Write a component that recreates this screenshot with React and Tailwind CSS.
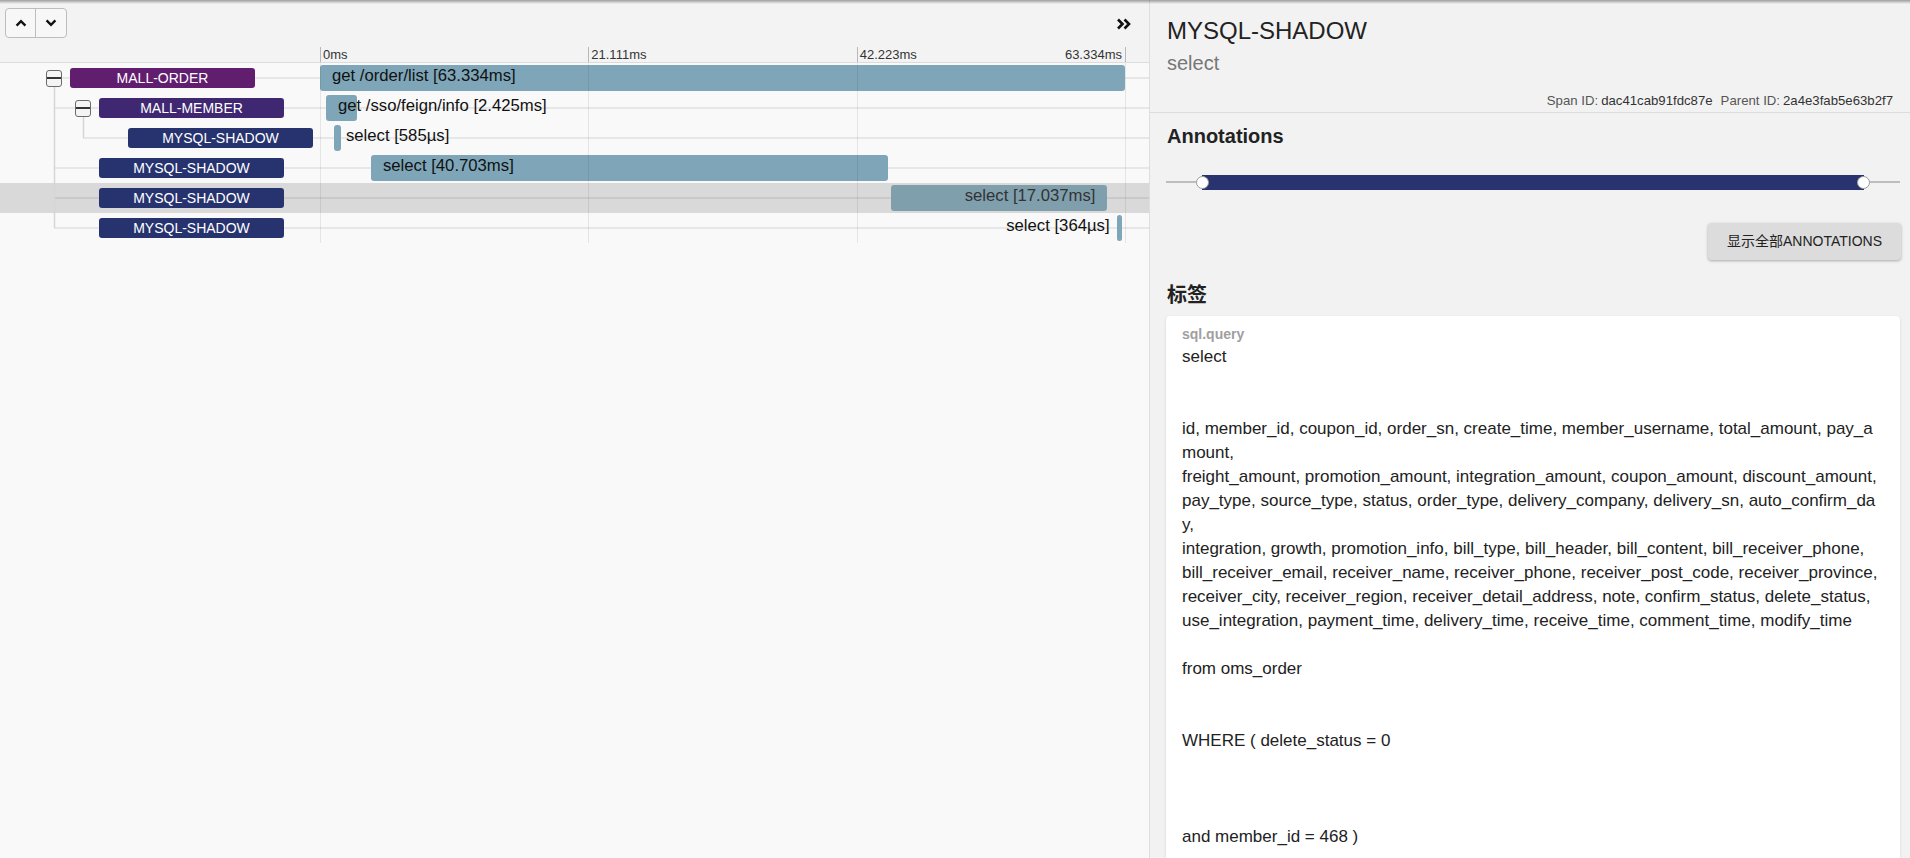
import React from "react";

const TOTAL = 63.334;
const SPAN_PX = 805;
const px = (ms) => (ms / TOTAL) * SPAN_PX;

const serviceClass = {
  "MALL-ORDER": "bg-[#611d6e]",
  "MALL-MEMBER": "bg-[#3f2871]",
  "MYSQL-SHADOW": "bg-[#27336f]",
};

const spans = [
  { depth: 0, service: "MALL-ORDER", name: "get /order/list", dur: "63.334ms", start: 0, ms: 63.334, toggle: true },
  { depth: 1, service: "MALL-MEMBER", name: "get /sso/feign/info", dur: "2.425ms", start: 0.472, ms: 2.425, toggle: true },
  { depth: 2, service: "MYSQL-SHADOW", name: "select", dur: "585µs", start: 1.1, ms: 0.585 },
  { depth: 1, service: "MYSQL-SHADOW", name: "select", dur: "40.703ms", start: 4.01, ms: 40.703 },
  { depth: 1, service: "MYSQL-SHADOW", name: "select", dur: "17.037ms", start: 44.92, ms: 17.037, selected: true },
  { depth: 1, service: "MYSQL-SHADOW", name: "select", dur: "364µs", start: 62.7, ms: 0.364 },
];

const ticks = [
  { x: 0, label: "0ms" },
  { x: 268.3, label: "21.111ms" },
  { x: 536.7, label: "42.223ms" },
  { x: 805, label: "63.334ms", last: true },
];

// sql.query value, already broken where the panel wraps it
const sql = [
  "select",
  "",
  "",
  "id, member_id, coupon_id, order_sn, create_time, member_username, total_amount, pay_a",
  "mount,",
  "freight_amount, promotion_amount, integration_amount, coupon_amount, discount_amount,",
  "pay_type, source_type, status, order_type, delivery_company, delivery_sn, auto_confirm_da",
  "y,",
  "integration, growth, promotion_info, bill_type, bill_header, bill_content, bill_receiver_phone,",
  "bill_receiver_email, receiver_name, receiver_phone, receiver_post_code, receiver_province,",
  "receiver_city, receiver_region, receiver_detail_address, note, confirm_status, delete_status,",
  "use_integration, payment_time, delivery_time, receive_time, comment_time, modify_time",
  "",
  "from oms_order",
  "",
  "",
  "WHERE ( delete_status = 0",
  "",
  "",
  "",
  "and member_id = 468 )",
].join("\n");

function Chevron({ down }) {
  return (
    <svg width="12" height="8" viewBox="0 0 12 8" className={down ? "rotate-180" : ""}>
      <path d="M1.6 6.6L6 2.2l4.4 4.4" fill="none" stroke="#111" strokeWidth="2.4" />
    </svg>
  );
}

function Toggle() {
  return (
    <div className="flex h-[17px] w-[16px] flex-none items-center rounded-[3px] border border-[#6b6b6b] bg-[#f4f4f4]">
      <div className="h-[2px] w-full bg-[#333]" />
    </div>
  );
}

function SpanRow({ s }) {
  const left = px(s.start);
  const width = Math.max(4, px(s.ms));
  const right = left + width;
  const lineLeft = s.depth === 0 ? 46 : 54 + 29 * (s.depth - 1);
  const leftText = s.start < TOTAL / 2;

  return (
    <div className={`relative flex h-[30px] ${s.selected ? "bg-[#d9d9d9]" : ""}`}>
      <div
        className={`absolute right-0 top-[14px] h-[2px] ${s.selected ? "bg-[#c9c9c9]" : "bg-[#e7e7e7]"}`}
        style={{ left: lineLeft }}
      />
      <div
        className="relative flex w-[320px] flex-none items-center gap-[8px]"
        style={{ paddingLeft: 46 + 29 * s.depth }}
      >
        {s.toggle ? <Toggle /> : <div className="w-[16px] flex-none" />}
        <div
          className={`h-[20px] w-[185px] flex-none rounded-[3px] text-center text-[14px] leading-[20px] text-white ${serviceClass[s.service]}`}
        >
          {s.service}
        </div>
      </div>
      <div className="relative flex-1">
        <div
          className={`absolute top-[2px] h-[26px] rounded-[3px] ${s.selected ? "bg-[#7f9fad]" : "bg-[#7ea6b8]"}`}
          style={{ left, width }}
        />
        <span
          className={`absolute top-[2px] whitespace-nowrap text-[16.7px] leading-[21px] ${
            s.selected ? "text-[#333]" : "text-[#111]"
          } ${leftText ? "" : "-translate-x-full"}`}
          style={{ left: leftText ? left + 12 : right - 12 }}
        >
          {s.name} [{s.dur}]
        </span>
      </div>
    </div>
  );
}

function Timeline() {
  return (
    <div className="flex h-full w-[1149px] flex-none flex-col bg-[#f9f9f9]">
      <div className="bg-[#f3f3f3]">
        <div className="flex h-[47px] items-start justify-between pl-[5px] pr-[17px] pt-[8px]">
          <div className="flex h-[30px] overflow-hidden rounded-[4px] border border-[#bdbdbd] bg-[#f7f7f7]">
            <button className="flex w-[30px] items-center justify-center border-r border-[#bdbdbd]">
              <Chevron />
            </button>
            <button className="flex w-[30px] items-center justify-center">
              <Chevron down />
            </button>
          </div>
          <svg className="mt-[10px]" width="16" height="12" viewBox="0 0 16 12">
            <path d="M2 1.5L6.5 6 2 10.5M8.5 1.5L13 6l-4.5 4.5" fill="none" stroke="#111" strokeWidth="2.6" />
          </svg>
        </div>
        <div className="relative h-[16px] border-b border-[#dcdcdc]">
          {ticks.map((t) => (
            <React.Fragment key={t.label}>
              <div className="absolute top-0 h-[15px] w-px bg-[#b8b8b8]" style={{ left: 320 + t.x }} />
              <span
                className={`absolute top-0 whitespace-nowrap text-[13px] leading-[15px] text-[#333] ${
                  t.last ? "-translate-x-full" : ""
                }`}
                style={{ left: t.last ? 320 + t.x - 3 : 320 + t.x + 3 }}
              >
                {t.label}
              </span>
            </React.Fragment>
          ))}
        </div>
      </div>

      <div className="relative">
        {spans.map((s, i) => (
          <SpanRow key={i} s={s} />
        ))}
        <svg className="pointer-events-none absolute left-0 top-0" width="320" height="180">
          <path d="M54.5 24V165M83.5 54V75" stroke="#d6d6d6" strokeWidth="1.5" />
        </svg>
        {ticks.map((t) => (
          <div
            key={t.label}
            className="pointer-events-none absolute bottom-0 top-0 w-px bg-[rgba(0,0,0,0.08)]"
            style={{ left: 320 + t.x }}
          />
        ))}
      </div>
    </div>
  );
}

function Detail() {
  return (
    <div className="flex h-full flex-1 flex-col border-l border-[#dedede] bg-[#f2f2f2] font-['Liberation_Sans','Noto_Sans_CJK_SC',sans-serif]">
      <div className="flex h-[113px] flex-none flex-col border-b border-[#dcdcdc] pl-[17px] pr-[17px] pt-[17px]">
        <h1 className="text-[24px] leading-[28px] text-[#222]">MYSQL-SHADOW</h1>
        <div className="mt-[6px] text-[20px] leading-[24px] text-[#777]">select</div>
        <div className="mt-auto flex justify-end gap-[8px] pb-[3px] text-[13.2px] leading-[16px]">
          <span>
            <span className="text-[#555]">Span ID:</span>
            <span className="ml-[3px] text-[#333]">dac41cab91fdc87e</span>
          </span>
          <span>
            <span className="text-[#555]">Parent ID:</span>
            <span className="ml-[3px] text-[#333]">2a4e3fab5e63b2f7</span>
          </span>
        </div>
      </div>

      <div className="flex flex-1 flex-col pl-[16px] pr-[10px] pt-[11px]">
        <h2 className="pl-px text-[20px] font-bold leading-[24px] text-[#222]">Annotations</h2>

        <div className="relative mt-[19px] h-[30px]">
          <div className="absolute left-0 right-0 top-[14px] h-[2px] bg-[#bdbdbd]" />
          <div className="absolute left-[36px] right-[36px] top-[8px] h-[15px] bg-[#283370]" />
          <div className="absolute left-[30px] top-[9px] h-[13px] w-[13px] rounded-full border border-[#9e9e9e] bg-white" />
          <div className="absolute right-[30px] top-[9px] h-[13px] w-[13px] rounded-full border border-[#9e9e9e] bg-white" />
        </div>

        <div className="mt-[26px] flex justify-end">
          <button className="-mr-px h-[37px] w-[193px] rounded-[4px] bg-[#dcdcdc] text-center text-[14px] text-[#222] shadow-[0_1px_3px_rgba(0,0,0,0.3)]">
            显示全部ANNOTATIONS
          </button>
        </div>

        <h2 className="mt-[23px] pl-px text-[20px] font-bold leading-[24px] text-[#222]">标签</h2>

        <div className="mt-[9px] flex-1 rounded-t-[4px] bg-white px-[16px] pt-[9px] shadow-[0_1px_3px_rgba(0,0,0,0.12)]">
          <div className="text-[14px] font-bold leading-[18px] text-[#a0a0a0]">sql.query</div>
          <div className="mt-[2px] whitespace-pre text-[17px] leading-[24px] text-[#222]">{sql}</div>
        </div>
      </div>
    </div>
  );
}

export default function App() {
  return (
    <div className="relative flex h-screen w-full overflow-hidden font-['Liberation_Sans',sans-serif]">
      <Timeline />
      <Detail />
      <div className="pointer-events-none absolute inset-x-0 top-0 h-[4px] bg-linear-to-b from-[rgba(0,0,0,0.35)] to-transparent" />
    </div>
  );
}
